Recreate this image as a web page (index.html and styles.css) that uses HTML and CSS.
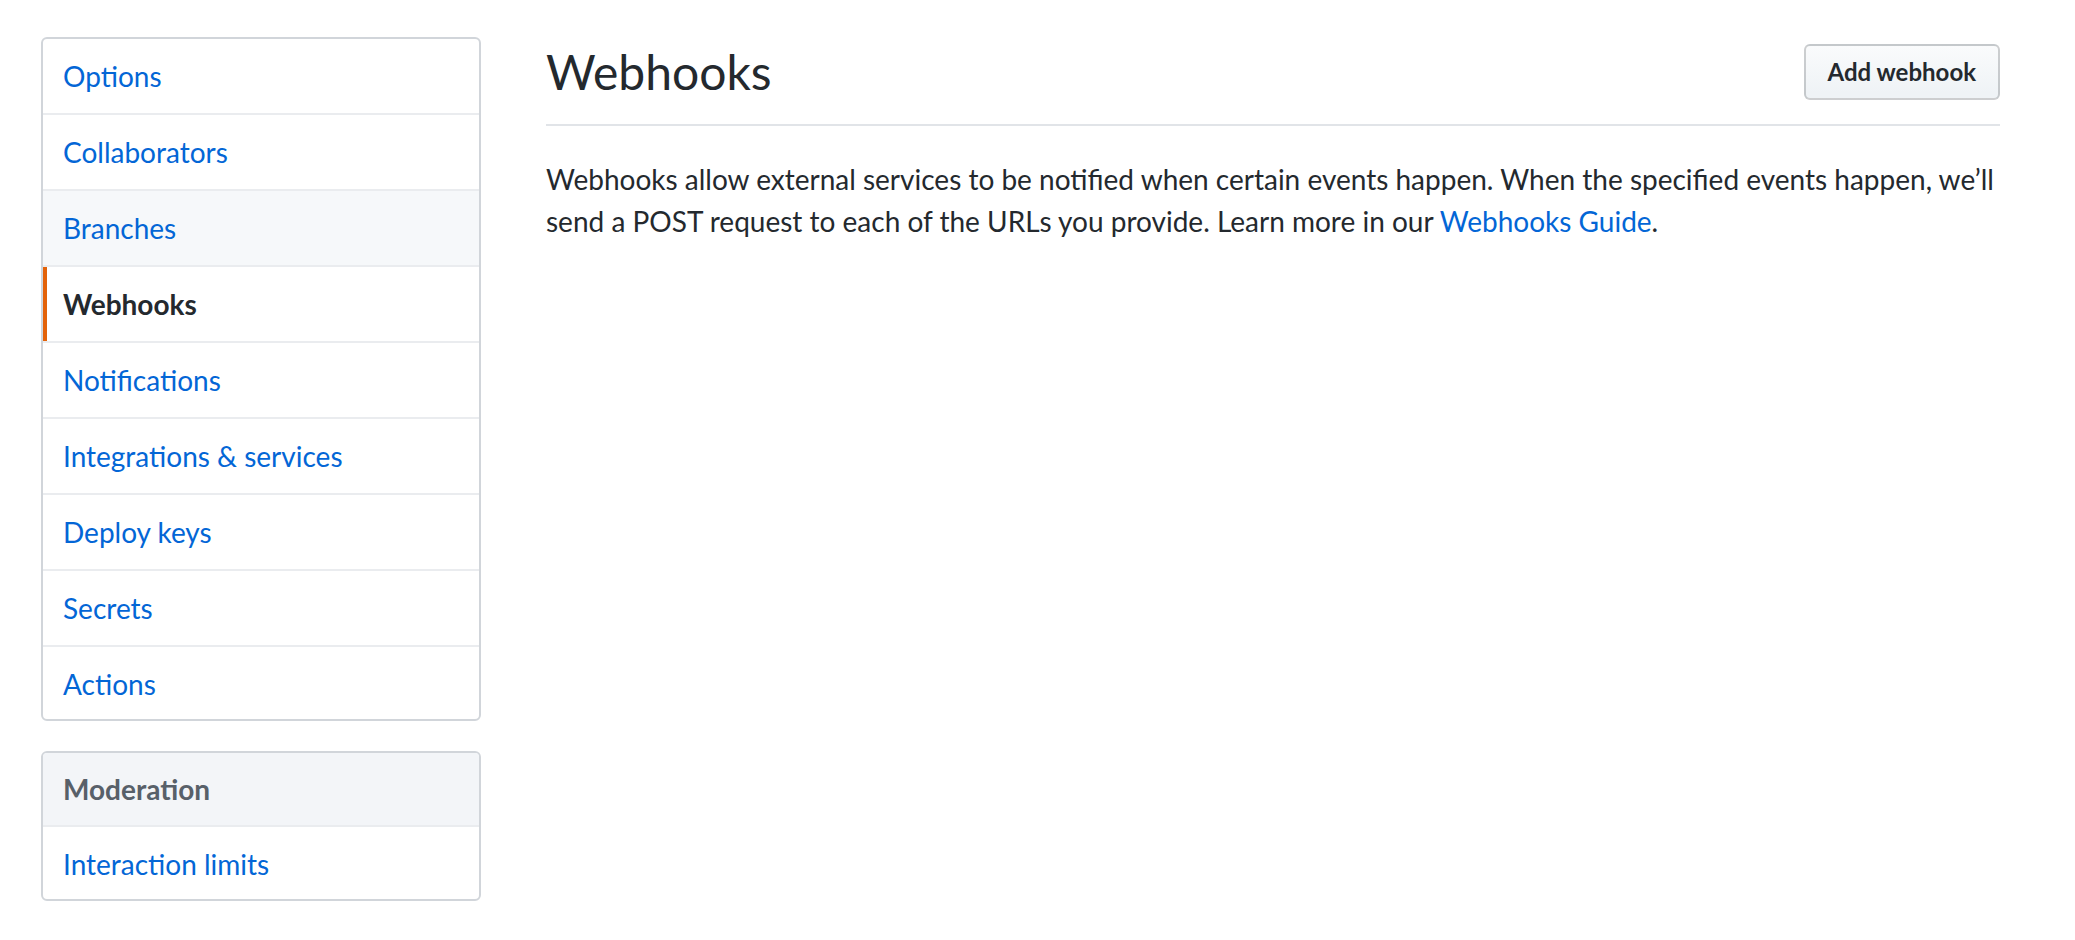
FILE: index.html
```html
<!DOCTYPE html>
<html lang="en">
<head>
<meta charset="utf-8">
<title>Webhooks</title>
<link rel="stylesheet" href="styles.css">
</head>
<body>
<div class="layout">
  <aside class="sidebar">
    <nav class="menu">
      <a class="menu-item" href="#">Options</a>
      <a class="menu-item" href="#">Collaborators</a>
      <a class="menu-item hover" href="#">Branches</a>
      <a class="menu-item selected" href="#">Webhooks</a>
      <a class="menu-item" href="#">Notifications</a>
      <a class="menu-item" href="#">Integrations &amp; services</a>
      <a class="menu-item" href="#">Deploy keys</a>
      <a class="menu-item" href="#">Secrets</a>
      <a class="menu-item" href="#">Actions</a>
    </nav>
    <nav class="menu">
      <h3 class="menu-heading">Moderation</h3>
      <a class="menu-item" href="#">Interaction limits</a>
    </nav>
  </aside>
  <main class="main">
    <div class="subhead">
      <h2 class="subhead-heading">Webhooks</h2>
      <div class="subhead-actions">
        <a class="btn" href="#">Add webhook</a>
      </div>
    </div>
    <p class="lead">Webhooks allow external services to be notified when certain events happen. When the specified events happen, we’ll send a POST request to each of the URLs you provide. Learn more in our <a class="link" href="#">Webhooks Guide</a>.</p>
  </main>
</div>
</body>
</html>
```

FILE: styles.css
```css
* { box-sizing: border-box; }

html, body {
  margin: 0;
  padding: 0;
  background: #fff;
}

body {
  font-family: Lato, "Open Sans", "Liberation Sans", sans-serif;
  font-size: 28px;
  line-height: 42px;
  color: #24292e;
}

.layout {
  display: flex;
  align-items: flex-start;
  gap: 65px;
  padding: 36px 0 0 41px;
}

.sidebar {
  width: 440px;
  flex: 0 0 440px;
  padding-top: 1px;
}

.menu {
  display: flex;
  flex-direction: column;
  margin: 0 0 30px;
  background: #fff;
  border: 2px solid #d1d5da;
  border-radius: 6px;
  overflow: hidden;
}

.menu-item {
  position: relative;
  display: block;
  padding: 16px 20px;
  border-bottom: 2px solid #eaecef;
  color: #0366d6;
  text-decoration: none;
}

.menu-item:last-child {
  border-bottom: 0;
  padding-bottom: 14px;
}

.menu-item.hover {
  background: #f6f8fa;
}

.menu-item.selected {
  font-weight: 700;
  color: #24292e;
  background: #fff;
}

.menu-item.selected::before {
  content: "";
  position: absolute;
  top: 0;
  bottom: 0;
  left: 0;
  width: 4px;
  background: #e36209;
}

.menu-heading {
  display: block;
  margin: 0;
  padding: 16px 20px;
  font-size: inherit;
  font-weight: 700;
  line-height: 40px;
  color: #586069;
  background: #f3f5f8;
  border-bottom: 2px solid #eaecef;
}

.main {
  width: 1454px;
  flex: 0 0 1454px;
}

.subhead {
  display: flex;
  align-items: center;
  padding-bottom: 16px;
  margin-bottom: 32px;
  border-bottom: 2px solid #e1e4e8;
}

.subhead-heading {
  flex: 1 1 auto;
  margin: 0;
  font-size: 48px;
  font-weight: 400;
  line-height: 60px;
}

.subhead-actions {
  margin: 8px 0 8px 8px;
}

.btn {
  display: inline-block;
  padding: 6px 22px;
  font-size: 24px;
  font-weight: 700;
  line-height: 40px;
  color: #24292e;
  text-decoration: none;
  white-space: nowrap;
  background: linear-gradient(-180deg, #fafbfc 0%, #eff3f6 90%);
  border: 2px solid rgba(27, 31, 35, 0.2);
  border-radius: 6px;
}

.lead {
  margin: 0;
}

.link {
  color: #0366d6;
  text-decoration: none;
}
```
